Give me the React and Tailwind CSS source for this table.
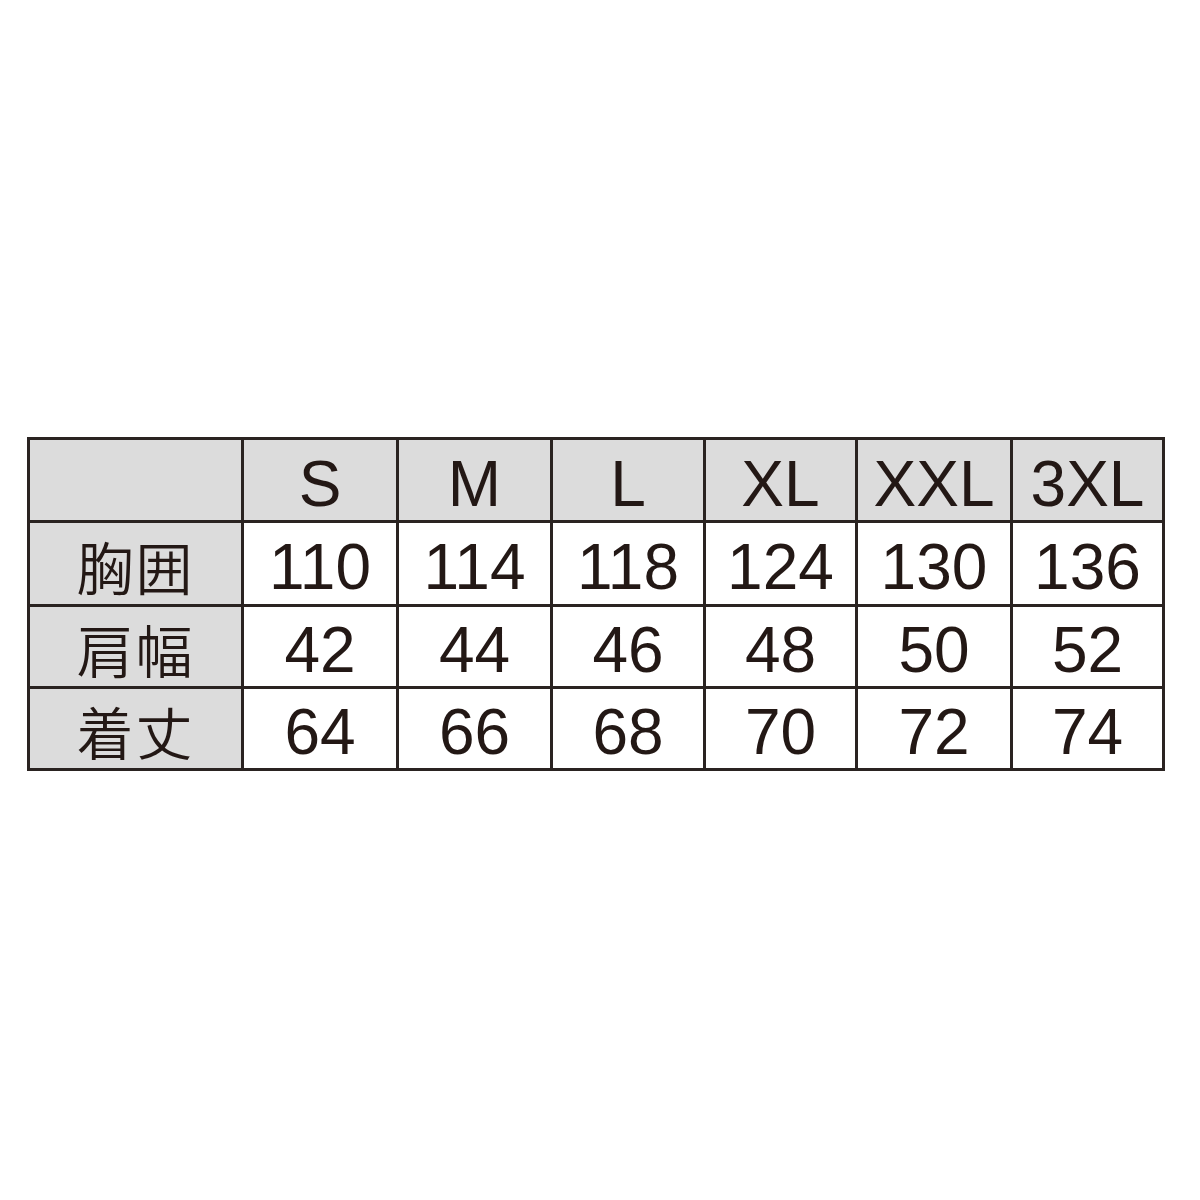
import React from 'react';

const sizes = ['S', 'M', 'L', 'XL', 'XXL', '3XL'];

const rows = [
  { label: '胸囲', values: ['110', '114', '118', '124', '130', '136'] },
  { label: '肩幅', values: ['42', '44', '46', '48', '50', '52'] },
  { label: '着丈', values: ['64', '66', '68', '70', '72', '74'] },
];

const App = () => {
  return (
    <div className="w-[1200px] h-[1200px] bg-white pt-[437px] pl-[27px] text-[#231815]" style={{ fontFamily: '"Liberation Sans", "Noto Sans CJK JP", sans-serif' }}>
      <div className="inline-grid grid-cols-[211px_152px_151px_150px_149px_152px_149px] grid-rows-[80px_81px_79px_79px] gap-[3px] p-[3px] bg-[#2a2321]">
        {/* Header row */}
        <div className="bg-[#dcdcdc]" />
        {sizes.map((s) => (
          <div key={s} className="bg-[#dcdcdc] flex items-center justify-center text-[64px] leading-none pt-[8px]">
            {s}
          </div>
        ))}

        {/* Body rows */}
        {rows.map((row) => (
          <React.Fragment key={row.label}>
            <div className="bg-[#dcdcdc] flex items-center justify-center text-[57px] font-[350] leading-none tracking-[2px] pt-[4px]" style={{ fontFamily: '"Noto Sans CJK JP", sans-serif' }}>
              {row.label}
            </div>
            {row.values.map((v, i) => (
              <div key={i} className="bg-white flex items-center justify-center text-[64px] leading-none pt-[6px]">
                {v}
              </div>
            ))}
          </React.Fragment>
        ))}
      </div>
    </div>
  );
};

export default App;
